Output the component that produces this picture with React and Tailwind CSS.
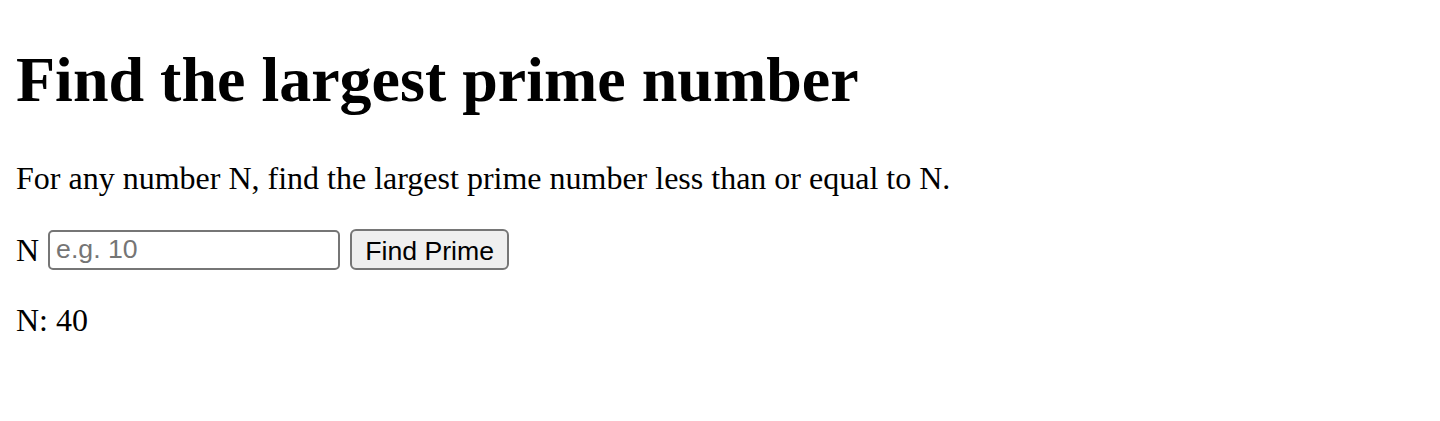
export default function App() {
  return (
    <div className="bg-white w-[1440px] h-[421px] px-4 text-black" style={{ fontFamily: '"Liberation Serif", "Times New Roman", serif' }}>
      <h1 className="text-[64px] font-bold leading-[74px] pt-[43px] pb-0">Find the largest prime number</h1>
      <p className="text-[32px] leading-[37px] mt-[43px]">For any number N, find the largest prime number less than or equal to N.</p>
      <div className="mt-[32px] flex items-center h-[41px] text-[32px]">
        <label htmlFor="n">N</label>
        <input
          id="n"
          type="text"
          placeholder="e.g. 10"
          className="ml-[9px] w-[292px] h-[40px] border-2 border-[#767676] rounded-[5px] px-[6px] text-[26.67px] placeholder:text-[#757575] bg-white"
          style={{ fontFamily: '"Liberation Sans", Arial, sans-serif' }}
        />
        <button
          className="ml-[10px] w-[159px] h-[41px] border-2 border-[#767676] rounded-[6px] bg-[#efefef] text-[26.67px] text-black"
          style={{ fontFamily: '"Liberation Sans", Arial, sans-serif' }}
        >
          Find Prime
        </button>
      </div>
      <p className="text-[32px] leading-[37px] mt-[32px]">N: 40</p>
    </div>
  );
}
